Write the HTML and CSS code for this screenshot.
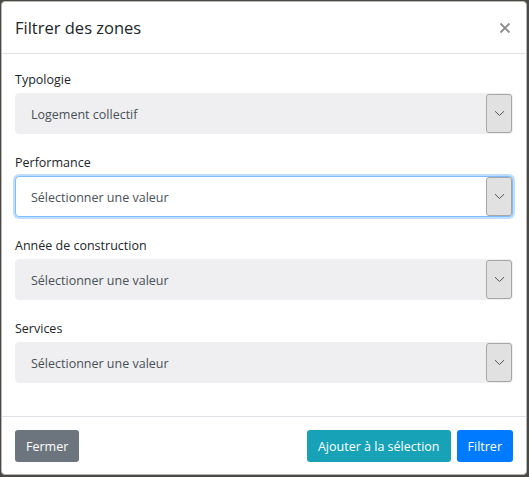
FILE: index.html
```html
<!DOCTYPE html>
<html lang="fr">
<head>
<meta charset="utf-8">
<title>Filtrer des zones</title>
<link rel="stylesheet" href="styles.css">
</head>
<body>
<div class="modal">
  <div class="modal-header">
    <h5 class="modal-title">Filtrer des zones</h5>
    <span class="close"><svg width="12" height="12" viewBox="0 0 12 12"><path d="M1.5 1.5 L10.5 10.5 M10.5 1.5 L1.5 10.5" stroke="#8c8c8c" stroke-width="1.8" fill="none"/></svg></span>
  </div>
  <div class="modal-body">
    <div class="form-group">
      <label class="label">Typologie</label>
      <div class="select">
        <span class="value">Logement collectif</span>
        <span class="arrow"><svg width="11" height="7" viewBox="0 0 11 7"><path d="M1 1.2 L5.5 5.5 L10 1.2" fill="none" stroke="#555" stroke-width="1"/></svg></span>
      </div>
    </div>
    <div class="form-group">
      <label class="label">Performance</label>
      <div class="select focused">
        <span class="value">Sélectionner une valeur</span>
        <span class="arrow"><svg width="11" height="7" viewBox="0 0 11 7"><path d="M1 1.2 L5.5 5.5 L10 1.2" fill="none" stroke="#555" stroke-width="1"/></svg></span>
      </div>
    </div>
    <div class="form-group">
      <label class="label">Année de construction</label>
      <div class="select">
        <span class="value">Sélectionner une valeur</span>
        <span class="arrow"><svg width="11" height="7" viewBox="0 0 11 7"><path d="M1 1.2 L5.5 5.5 L10 1.2" fill="none" stroke="#555" stroke-width="1"/></svg></span>
      </div>
    </div>
    <div class="form-group">
      <label class="label">Services</label>
      <div class="select">
        <span class="value">Sélectionner une valeur</span>
        <span class="arrow"><svg width="11" height="7" viewBox="0 0 11 7"><path d="M1 1.2 L5.5 5.5 L10 1.2" fill="none" stroke="#555" stroke-width="1"/></svg></span>
      </div>
    </div>
  </div>
  <div class="modal-footer">
    <button class="btn btn-secondary">Fermer</button>
    <div class="spacer"></div>
    <button class="btn btn-info">Ajouter à la sélection</button>
    <button class="btn btn-primary">Filtrer</button>
  </div>
</div>
</body>
</html>
```
FILE: styles.css
```css
* { box-sizing: border-box; }
html, body { margin: 0; padding: 0; }
body {
  background: #4b4844;
  font-family: "Open Sans", "Noto Sans", sans-serif;
  color: #212529;
  padding: 1px 2px 2px 1px;
  height: 477px;
}
.modal {
  width: 526px;
  height: 474px;
  background: #fff;
  border: 1px solid #b8b8b8;
  border-radius: 4px;
  display: flex;
  flex-direction: column;
}
.modal-header {
  height: 52px;
  border-bottom: 1px solid #dee2e6;
  display: flex;
  align-items: center;
  padding: 0 13px;
}
.modal-title {
  margin: 0;
  flex: 1;
  font-size: 16.5px;
  font-weight: 400;
  color: #212529;
}
.close {
  display: flex;
  margin-right: 2px;
  margin-top: 1px;
}
.modal-body {
  padding: 16px 13px 12px;
  flex: 1;
}
.form-group { margin-bottom: 19px; }
.label {
  display: block;
  font-size: 12.5px;
  line-height: 20px;
  margin-bottom: 3px;
  color: #212529;
}
.select {
  height: 41px;
  background: #efeff1;
  border: 1px solid #efeff1;
  border-radius: 4px;
  display: flex;
  align-items: center;
  padding: 0 0 0 15px;
  font-size: 12.5px;
  color: #495057;
}
.select.focused {
  background: #fff;
  border-color: #80bdff;
  box-shadow: 0 0 0 2px rgba(0, 123, 255, 0.25);
}
.value { flex: 1; padding-top: 1px; }
.arrow {
  width: 26px;
  height: 39px;
  background: #e1e1e1;
  border: 1px solid #a6a6a6;
  border-radius: 3px;
  display: flex;
  align-items: center;
  justify-content: center;
}
.modal-footer {
  border-top: 1px solid #dee2e6;
  padding: 13px 13px 12px;
  display: flex;
  gap: 6px;
}
.spacer { flex: 1; }
.btn {
  height: 32px;
  border: none;
  border-radius: 3px;
  color: #fff;
  font-family: "Open Sans", "Noto Sans", sans-serif;
  font-size: 12.5px;
  padding: 0 11px;
}
.btn-secondary { background: #6c757d; }
.btn-info { background: #17a2b8; }
.btn-primary { background: #007bff; }
```
